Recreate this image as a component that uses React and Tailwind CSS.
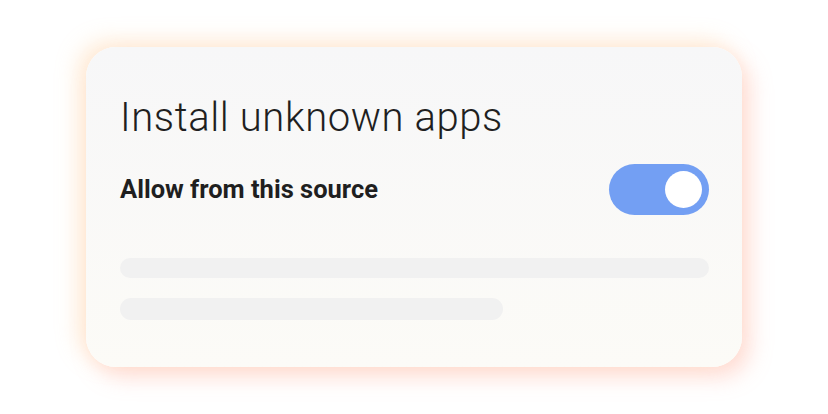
export default function App() {
  return (
    <div className="w-[828px] h-[414px] bg-white flex items-center justify-center" style={{ fontFamily: 'Roboto, "Liberation Sans", sans-serif' }}>
      <div className="w-[656px] h-[320px] rounded-[30px] bg-gradient-to-b from-[#f7f7f8] to-[#fcfbf7] shadow-[-8px_-6px_22px_rgba(255,200,140,0.35),8px_10px_22px_rgba(255,160,140,0.35)] pl-[34px] pr-[33px] pt-[47px] flex flex-col">
        <div className="text-[40px] leading-[48px] font-light text-[#1f1f1f] tracking-[0.6px]">Install unknown apps</div>
        <div className="flex items-center justify-between mt-[22px]">
          <div className="text-[25.5px] font-bold text-[#1f1f1f]">Allow from this source</div>
          <div className="w-[100px] h-[51px] rounded-full bg-[#739ff3] flex items-center justify-end pr-[7px]">
            <div className="w-[37px] h-[37px] rounded-full bg-white" />
          </div>
        </div>
        <div className="mt-[43px] h-[20px] rounded-full bg-[#f1f1f1]" />
        <div className="mt-[20px] h-[22px] w-[383px] rounded-full bg-[#f1f1f1]" />
      </div>
    </div>
  );
}
